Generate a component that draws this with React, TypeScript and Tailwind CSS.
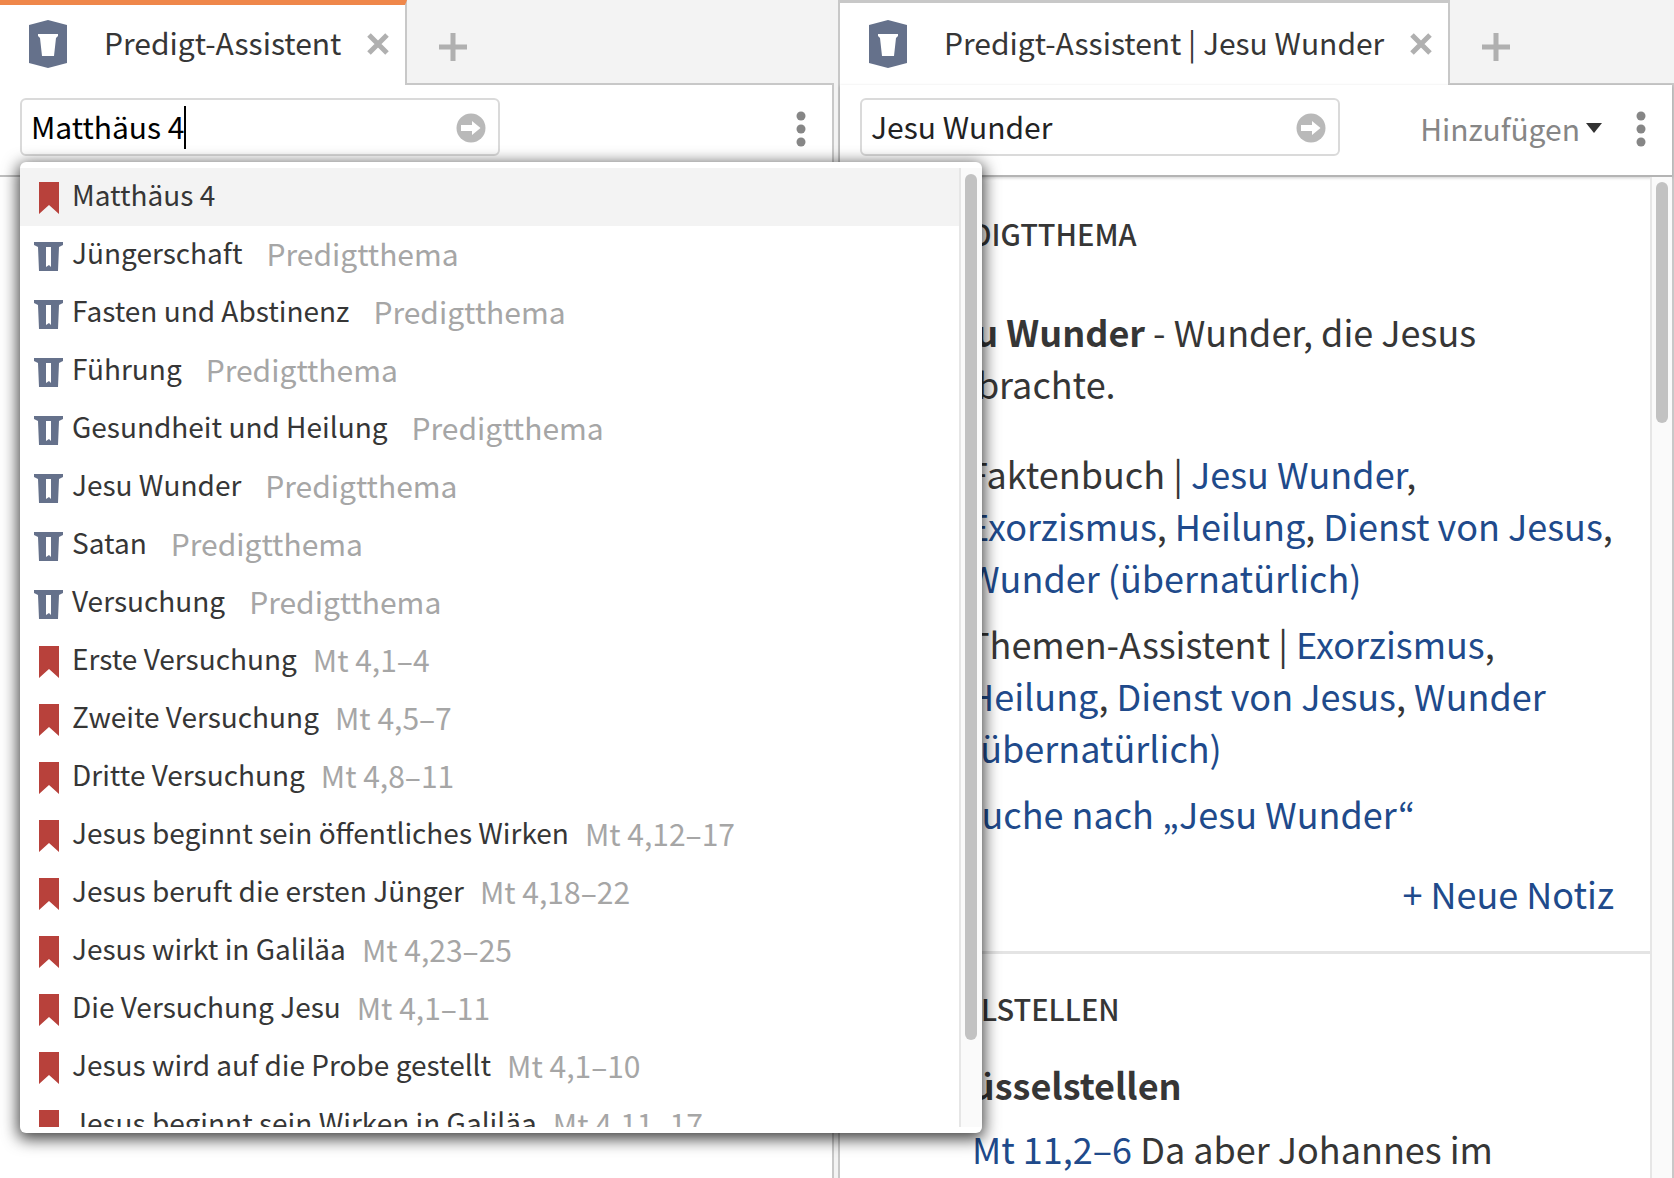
import React, { useState } from 'react';

type EntryKind = 'passage' | 'topic';

interface Entry {
    kind: EntryKind;
    title: string;
    hint?: string;
}

const ENTRIES: Entry[] = [
    { kind: 'passage', title: 'Matthäus 4' },
    { kind: 'topic', title: 'Jüngerschaft', hint: 'Predigtthema' },
    { kind: 'topic', title: 'Fasten und Abstinenz', hint: 'Predigtthema' },
    { kind: 'topic', title: 'Führung', hint: 'Predigtthema' },
    { kind: 'topic', title: 'Gesundheit und Heilung', hint: 'Predigtthema' },
    { kind: 'topic', title: 'Jesu Wunder', hint: 'Predigtthema' },
    { kind: 'topic', title: 'Satan', hint: 'Predigtthema' },
    { kind: 'topic', title: 'Versuchung', hint: 'Predigtthema' },
    { kind: 'passage', title: 'Erste Versuchung', hint: 'Mt 4,1–4' },
    { kind: 'passage', title: 'Zweite Versuchung', hint: 'Mt 4,5–7' },
    { kind: 'passage', title: 'Dritte Versuchung', hint: 'Mt 4,8–11' },
    { kind: 'passage', title: 'Jesus beginnt sein öffentliches Wirken', hint: 'Mt 4,12–17' },
    { kind: 'passage', title: 'Jesus beruft die ersten Jünger', hint: 'Mt 4,18–22' },
    { kind: 'passage', title: 'Jesus wirkt in Galiläa', hint: 'Mt 4,23–25' },
    { kind: 'passage', title: 'Die Versuchung Jesu', hint: 'Mt 4,1–11' },
    { kind: 'passage', title: 'Jesus wird auf die Probe gestellt', hint: 'Mt 4,1–10' },
    { kind: 'passage', title: 'Jesus beginnt sein Wirken in Galiläa', hint: 'Mt 4,11–17' },
];

const AppBadge = () => (
    <svg width="40" height="48" viewBox="0 0 40 48" className="shrink-0" aria-hidden="true">
        <path d="M20 0 39 5v38l-19 5L1 43V5z" fill="#65718b" />
        <path d="M10 14h20v2l-2 2-2 18H14l-2-18-2-2z" fill="#fff" />
    </svg>
);

const PulpitIcon = () => (
    <svg width="30" height="30" viewBox="0 0 30 30" aria-hidden="true">
        <path d="M0 1h29v3l-4 2-1 24H5L4 6 0 4z" fill="#65718b" />
        <path d="M12 6h5v20l-2-2-3 2z" fill="#fff" />
    </svg>
);

const BookmarkIcon = () => (
    <svg width="20" height="32" viewBox="0 0 20 32" aria-hidden="true">
        <path d="M0 0h20v32L10 23 0 32z" fill="#b8413b" />
    </svg>
);

const CloseIcon = () => (
    <svg width="22" height="22" viewBox="0 0 22 22" aria-hidden="true">
        <path d="M2 2 20 20M20 2 2 20" stroke="#b0b0b0" strokeWidth="5" />
    </svg>
);

const PlusIcon = () => (
    <svg width="28" height="28" viewBox="0 0 28 28" aria-hidden="true">
        <path d="M14 0v28M0 14h28" stroke="#b0b0b0" strokeWidth="5" />
    </svg>
);

const GoIcon = () => (
    <svg width="30" height="30" viewBox="0 0 30 30" aria-hidden="true">
        <circle cx="15" cy="15" r="14.500" fill="#b9b9b9" />
        <path d="M5 12h11V8l8.500 7-8.500 7v-4H5z" fill="#fff" />
    </svg>
);

const MenuDots = () => (
    <button aria-label="Menü" className="shrink-0">
        <svg width="10" height="36" viewBox="0 0 10 36" aria-hidden="true">
            <g fill="#868686">
                <circle cx="5" cy="5" r="4.500" />
                <circle cx="5" cy="18" r="4.500" />
                <circle cx="5" cy="31" r="4.500" />
            </g>
        </svg>
    </button>
);

const TabBar: React.FC<{ title: string; active?: boolean }> = ({ title, active }) => (
    <div className="flex h-[85px] shrink-0 bg-[#f3f3f3]">
        <div
            className={`flex items-center border-r-2 border-r-[#c8c8c8] bg-white pr-4 pl-7 ${
                active ? 'border-t-[5px] border-t-[#ef874a] pb-[2px]' : 'border-t-[3px] border-t-[#c8c8c8]'
            }`}
        >
            <AppBadge />
            <span className="ml-9 pb-1 text-[30px] leading-10 whitespace-nowrap">{title}</span>
            <button aria-label="Tab schließen" className="ml-[26px]">
                <CloseIcon />
            </button>
        </div>
        <div className="flex flex-1 items-center border-b-2 border-[#c8c8c8] pt-[10px] pl-8">
            <button aria-label="Neuer Tab">
                <PlusIcon />
            </button>
        </div>
    </div>
);

interface SearchBoxProps {
    value: string;
    onChange: (value: string) => void;
    caret?: boolean;
}

const SearchBox: React.FC<SearchBoxProps> = ({ value, onChange, caret }) => (
    <div className="relative flex h-[58px] w-[480px] items-center rounded-md border-2 border-[#dadada] bg-white pr-3 pl-[9px]">
        <input
            aria-label="Suche"
            value={value}
            onChange={(e) => onChange(e.target.value)}
            className={`min-w-0 flex-1 bg-transparent pb-[2px] text-[30px] leading-10 outline-none ${caret ? 'text-black' : 'text-[#222]'}`}
        />
        {caret && <span className="absolute top-[6px] left-[162px] h-[43px] w-[2px] bg-black" />}
        <button aria-label="Los" className="pt-[2px]">
            <GoIcon />
        </button>
    </div>
);

const Suggestions = () => (
    <div className="absolute top-[162px] left-5 z-10 flex h-[971px] w-[962px] rounded-md bg-white py-[6px] shadow-[0_4px_16px_2px_rgba(0,0,0,0.75)]">
        <ul className="flex-1 overflow-hidden">
            {ENTRIES.map((entry, i) => (
                <li key={entry.title} className={i === 0 ? 'bg-[#f3f3f3]' : ''}>
                    <button className="flex h-[58px] w-full items-center text-left text-[28px] leading-10 whitespace-nowrap">
                        <span className="flex w-[52px] justify-center pt-[2px] pl-[6px]">
                            {entry.kind === 'passage' ? <BookmarkIcon /> : <PulpitIcon />}
                        </span>
                        <span className="pb-[6px]">{entry.title}</span>
                        {entry.hint && (
                            <span className={`pb-1 text-[30px] text-[#a6a6a6] ${entry.kind === 'topic' ? 'ml-6' : 'ml-4'}`}>
                                {entry.hint}
                            </span>
                        )}
                    </button>
                </li>
            ))}
        </ul>
        <div className="w-[23px] border-l-2 border-[#e6e6e6] bg-[#fafafa] pt-[6px] pl-1">
            <div className="h-[866px] w-3 rounded-full bg-[#c2c2c2]" />
        </div>
    </div>
);

const Ref: React.FC<{ children: React.ReactNode }> = ({ children }) => (
    <a href="#" className="text-[#204a8b]">
        {children}
    </a>
);

export default function App() {
    const [query, setQuery] = useState('Matthäus 4');
    const [topic, setTopic] = useState('Jesu Wunder');

    return (
        <div className="relative flex h-screen overflow-hidden bg-[#f3f3f3] font-['Noto_Sans_CJK_JP',sans-serif] text-[#363636]">
            {/* Left panel */}
            <section className="flex min-w-0 flex-1 flex-col">
                <TabBar title="Predigt-Assistent" active />
                <div className="flex flex-1 flex-col border-r-2 border-[#c8c8c8] bg-white">
                    <div className="flex h-[92px] shrink-0 items-start justify-between border-b-2 border-[#c0c0c0] pt-[13px] pr-[26px] pl-5">
                        <SearchBox value={query} onChange={setQuery} caret />
                        <div className="pt-[13px]">
                            <MenuDots />
                        </div>
                    </div>
                </div>
                <Suggestions />
            </section>

            {/* Right panel */}
            <section className="ml-1 flex min-w-0 flex-1 flex-col border-l-2 border-[#c8c8c8]">
                <TabBar title="Predigt-Assistent | Jesu Wunder" />
                <div className="flex min-h-0 flex-1 flex-col border-r-2 border-[#c8c8c8] bg-white">
                    <div className="flex h-[92px] shrink-0 items-start border-b-2 border-[#b4b4b4] pt-[13px] pr-[26px] pl-5 shadow-[0_1px_3px_rgba(0,0,0,0.2)]">
                        <SearchBox value={topic} onChange={setTopic} />
                        <button className="mt-[10px] ml-auto flex items-center gap-[6px] text-[30px] leading-10 text-[#868686]">
                            Hinzufügen
                            <svg width="16" height="10" viewBox="0 0 16 10" aria-hidden="true">
                                <path d="M0 0h16L8 10z" fill="#333" />
                            </svg>
                        </button>
                        <div className="ml-[34px] pt-[13px]">
                            <MenuDots />
                        </div>
                    </div>
                    <div className="flex min-h-0 flex-1">
                        <main className="min-w-0 flex-1 overflow-hidden text-[36px] leading-[52px]">
                            <div className="border-b-[3px] border-[#e4e4e4] pt-9 pr-9 pb-8 pl-[76px]">
                                <h2 className="text-[29px] leading-10 font-medium">PREDIGTTHEMA</h2>
                                <p className="mt-[52px]">
                                    <b>Jesu Wunder</b> - Wunder, die Jesus
                                    <br />
                                    vollbrachte.
                                </p>
                                <ul className="mt-[38px] space-y-[14px] pl-[52px] whitespace-nowrap">
                                    <li>
                                        Faktenbuch | <Ref>Jesu Wunder</Ref>,<br />
                                        <Ref>Exorzismus</Ref>, <Ref>Heilung</Ref>, <Ref>Dienst von Jesus</Ref>,<br />
                                        <Ref>Wunder (übernatürlich)</Ref>
                                    </li>
                                    <li>
                                        Themen-Assistent | <Ref>Exorzismus</Ref>,<br />
                                        <Ref>Heilung</Ref>, <Ref>Dienst von Jesus</Ref>, <Ref>Wunder</Ref>
                                        <br />
                                        <Ref>(übernatürlich)</Ref>
                                    </li>
                                    <li className="-ml-2">
                                        <Ref>Suche nach „Jesu Wunder“</Ref>
                                    </li>
                                </ul>
                                <div className="mt-7 text-right">
                                    <button className="text-[#204a8b]">+ Neue Notiz</button>
                                </div>
                            </div>
                            <div className="pt-[34px] pr-9 pl-[76px]">
                                <h2 className="text-[29px] leading-10 font-medium">BIBELSTELLEN</h2>
                                <h3 className="mt-[30px] -ml-5 font-bold">Schlüsselstellen</h3>
                                <p className="mt-3 pl-[56px] whitespace-nowrap">
                                    <Ref>Mt 11,2–6</Ref> Da aber Johannes im
                                </p>
                            </div>
                        </main>
                        <div className="w-[22px] border-l-2 border-[#e6e6e6] bg-[#fafafa] pt-[5px] pl-1">
                            <div className="h-[241px] w-3 rounded-full bg-[#c2c2c2]" />
                        </div>
                    </div>
                </div>
            </section>
        </div>
    );
}
